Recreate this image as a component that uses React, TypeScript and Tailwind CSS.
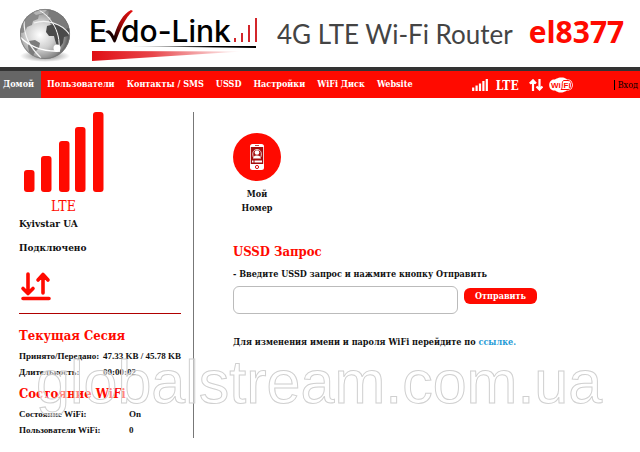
import type { ReactNode } from "react";

const NAV_ITEMS = ["Домой", "Пользователи", "Контакты / SMS", "USSD", "Настройки", "WiFi Диск", "Website"];

const BIG_BARS = [
  { x: 0, h: 22 },
  { x: 17, h: 36 },
  { x: 35, h: 51 },
  { x: 51, h: 65 },
  { x: 69, h: 80 }
];

function Globe() {
  return (
    <svg className="h-14 w-13 shrink-0" viewBox="0 0 52 56" aria-hidden="true">
      <defs>
        <radialGradient id="globe" cx="40%" cy="52%" r="62%">
          <stop offset="0" stopColor="#ffffff" />
          <stop offset="0.45" stopColor="#cfcfcf" />
          <stop offset="0.8" stopColor="#8a8a8a" />
          <stop offset="1" stopColor="#3c3c3c" />
        </radialGradient>
        <radialGradient id="globeShade">
          <stop offset="0" stopColor="#777" />
          <stop offset="1" stopColor="#777" stopOpacity="0" />
        </radialGradient>
        <clipPath id="globeClip">
          <circle cx="25" cy="28" r="25" />
        </clipPath>
      </defs>
      <ellipse cx="25" cy="50" rx="25" ry="6" fill="url(#globeShade)" />
      <circle cx="25" cy="28" r="25" fill="url(#globe)" />
      <g clipPath="url(#globeClip)">
        <path d="M1 22 4 12 12 6l8-3 6 1-2 4-5 1-1 4-5 2-1 4-5 2-2 5-3 1-3-1z" fill="#8a8a8a" />
        <path d="M11 5l8-3 9 1-4 4-8 2z" fill="#b5b5b5" />
        <path d="M29 5l8 1 7 6 5 9-3 2-4-3-4 1-3-3-4 1-2-4 2-3-3-2z" fill="#7a7a7a" />
        <path d="M27 20l7-2 6 2 5 3 4 1-1 6-4 1-1 6-3 4-3-1-2-6-1-4-5 0-3-4z" fill="#4a4a4a" />
        <path d="M9 35l6-1 5 3-1 5-4 4-2 4-4-4-1-6z" fill="#7c7c7c" />
        <path d="M0 31c8 8 20 15 40 14" fill="none" stroke="#fff" strokeWidth="1.6" />
        <path d="M17 3c12 6 24 20 22 42" fill="none" stroke="#fff" strokeWidth="1" />
        <path d="M14 17c12-4 28 0 36 12" fill="none" stroke="#f4f4f4" strokeWidth="1.2" />
        <path d="M4 15c0 16 6 26 17 37" fill="none" stroke="#f4f4f4" strokeWidth="1.2" />
        <circle cx="37" cy="42" r="3.5" fill="#fff" />
      </g>
      <circle cx="25" cy="28" r="24.6" fill="none" stroke="#777" strokeWidth="0.8" />
    </svg>
  );
}

function Logo() {
  return (
    <svg className="h-14 w-[170px] shrink-0" viewBox="0 0 170 56" role="img" aria-label="Evdo-Link">
      <defs>
        <linearGradient id="tick" x1="1" y1="0" x2="0" y2="1">
          <stop offset="0" stopColor="#e81010" />
          <stop offset="0.4" stopColor="#a80a0a" />
          <stop offset="0.75" stopColor="#1a0000" />
        </linearGradient>
        <linearGradient id="wedge">
          <stop offset="0" stopColor="#e00f14" />
          <stop offset="0.4" stopColor="#e8454a" />
          <stop offset="1" stopColor="#ffffff" />
        </linearGradient>
        <linearGradient id="rule">
          <stop offset="0.1" stopColor="#000" stopOpacity="0" />
          <stop offset="0.7" stopColor="#000" />
        </linearGradient>
      </defs>
      <text x="0" y="36" fontFamily="Inter, sans-serif" fontSize="30" fontWeight="500" fill="#000">
        E
      </text>
      <text x="32" y="36" fontFamily="Inter, sans-serif" fontSize="30" fontWeight="500" fill="#000">
        do-Link
      </text>
      <path d="M16 26c3-3 6-2 9 4C29 17 34 8 42 4l2 1C36 12 32 22 27 35c-1 2-2 2-3 0-2-5-4-8-8-9z" fill="url(#tick)" />
      <path d="M146 32v4M153 27v9M160 19v17M167 12v24" stroke="#d3262b" strokeWidth="2" />
      <path d="M23 40 167 40v2z" fill="url(#rule)" />
      <path d="M3 45 153 45.5 3 55z" fill="url(#wedge)" />
    </svg>
  );
}

function TransferArrows() {
  return (
    <svg className="h-[30px] w-8" viewBox="0 0 32 30" fill="none" stroke="#ff0a00" strokeLinecap="round" strokeLinejoin="round" strokeWidth="3.6" aria-hidden="true">
      <path d="M9 3v19M4 17.500l5 5 5-5M24 22V3.500M19 9l5-5.500 5 5.500M4 27.500h26" />
    </svg>
  );
}

function StatusIcons() {
  return (
    <div className="flex items-center text-white">
      <svg className="h-3 w-4" viewBox="0 0 16 12" stroke="currentColor" strokeWidth="2.2" aria-hidden="true">
        <path d="M1.200 8.500V12M4.600 6.500V12M8 4.500V12M11.400 2v10M14.800 0v12" />
      </svg>
      <span className="ml-2 pt-[3px] text-[12px] leading-4">LTE</span>
      <svg className="ml-[10px] h-3 w-[14px]" viewBox="0 0 14 12" fill="none" stroke="currentColor" strokeWidth="2.2" aria-hidden="true">
        <path d="M4 12V1.500M.8 4.600 4 1.400l3 3.200M10.500 0v10.500M7.500 7.500l3 3 3-3" />
      </svg>
      <svg className="ml-[6px] h-4 w-6" viewBox="0 0 24 16" aria-label="Wi-Fi">
        <path d="M5 2.500C7 2.500 8 .5 12.500.5S17 2.500 19 2.500c3 0 4.800 2.500 4.800 5.500s-2 5.500-5 5.500c-2 0-3 2-7 2s-4.500-2-6.500-2C2 13.500.2 11 .2 8S2 2.500 5 2.500z" fill="#fff" />
        <path d="M14.500 3.500H19c2.500 0 3.500 2 3.500 4.500s-1 4.500-3.500 4.500h-7c1-1 1.200-2 1.200-4.500s.3-3.500 1.300-4.500z" fill="none" stroke="#ff0a00" strokeWidth="1" />
        <text x="2" y="11" fontFamily="Liberation Sans, sans-serif" fontSize="8" fontWeight="700" fill="#ff0a00">
          Wi
        </text>
        <text x="14.500" y="11" fontFamily="Liberation Sans, sans-serif" fontSize="8" fontWeight="700" fill="#ff0a00">
          Fi
        </text>
      </svg>
    </div>
  );
}

function PhoneIcon() {
  return (
    <svg className="h-12 w-12" viewBox="0 0 48 48" aria-hidden="true">
      <circle cx="24" cy="24" r="24" fill="#ff0a00" />
      <rect x="17" y="11" width="14" height="26" rx="2.5" fill="#fff" />
      <path d="M22 12.500h4" stroke="#c44" strokeWidth="1" />
      <rect x="17.800" y="14" width="12.400" height="17" fill="#a30d0d" />
      <path d="M20.300 24c-3.500-10 11-10 7.500 0" fill="none" stroke="#fff" strokeWidth="0.8" />
      <circle cx="24" cy="19.500" r="2.3" fill="#fff" />
      <path d="M20 25.500c.5-2 1.500-3 4-3s3.500 1 4 3z" fill="#fff" />
      <path d="M19 28.500h1.500M21.500 28.500h7.500" stroke="#fff" strokeWidth="1.8" />
      <circle cx="24" cy="34" r="1.6" fill="#fff" stroke="#d11" strokeWidth="1" />
    </svg>
  );
}

function Title({ children }: { children: ReactNode }) {
  return <h2 className="text-[13px] leading-5 text-[#ff0a00]">{children}</h2>;
}

export default function App() {
  return (
    <div className="relative min-h-screen overflow-hidden bg-white font-['DejaVu_Serif_Condensed','DejaVu_Serif',serif] text-[9px] font-bold text-[#111]">
      <header className="flex h-[67px] items-center pl-5">
        <Globe />
        <div className="ml-[17px]">
          <Logo />
        </div>
        <p className="ml-[18px] whitespace-nowrap font-['Lato',sans-serif] text-[26px] leading-8 font-normal text-[#444]">4G LTE Wi-Fi Router</p>
        <p className="ml-4 pb-1 font-['Open_Sans',sans-serif] text-[30px] leading-8 text-[#ff0a00]">el8377</p>
      </header>

      <nav className="flex h-[31px] items-stretch border-t-4 border-[#333] bg-[#ff0a00]">
        {NAV_ITEMS.map((item, i) => (
          <a
            key={item}
            href="#"
            className={
              i === 0
                ? "flex items-center bg-[#666] pr-[7px] pl-[3px] whitespace-nowrap text-white"
                : "flex items-center px-[6px] whitespace-nowrap text-white"
            }
          >
            {item}
          </a>
        ))}
        <div className="mr-[41px] ml-auto flex items-center">
          <StatusIcons />
        </div>
        <a href="#" className="flex items-center pr-[2px] text-[9px] font-normal text-black">
          <span className="border-l border-black pl-[3px] leading-[10px]">Вход</span>
        </a>
      </nav>

      <div className="flex pt-[14px]">
        <aside className="w-[194px] shrink-0 border-r border-[#777] pl-[19px]">
          <svg className="ml-[5px] h-20 w-20" viewBox="0 0 80 80" fill="#ff0a00" aria-hidden="true">
            {BIG_BARS.map((bar) => (
              <rect key={bar.x} x={bar.x} y={80 - bar.h} width="10.5" height={bar.h} rx="3" />
            ))}
          </svg>
          <p className="ml-8 pt-1 text-[14px] leading-5 font-normal text-[#ff0a00]">LTE</p>
          <p className="text-[10px] leading-4">Kyivstar UA</p>
          <p className="mt-2 text-[10px] leading-4">Подключено</p>
          <div className="mt-[15px]">
            <TransferArrows />
          </div>
          <hr className="mt-3 mr-3 h-px border-0 bg-[#b00000]" />

          <div className="pt-3">
            <Title>Текущая Сесия</Title>
          </div>
          <table className="mt-[2px] font-['Liberation_Serif',serif] text-[9px] leading-4 whitespace-nowrap">
            <tbody>
              <tr>
                <th className="w-[84px] p-0 text-left">Принято/Передано:</th>
                <td className="p-0">47.33 KB / 45.78 KB</td>
              </tr>
              <tr>
                <th className="p-0 text-left">Длительность:</th>
                <td className="p-0">00:00:02</td>
              </tr>
            </tbody>
          </table>
          <div className="pt-1">
            <Title>Состояние WiFi</Title>
          </div>
          <table className="mt-[2px] font-['Liberation_Serif',serif] text-[9px] leading-4 whitespace-nowrap">
            <tbody>
              <tr>
                <th className="w-[110px] p-0 text-left">Состояние WiFi:</th>
                <td className="p-0">On</td>
              </tr>
              <tr>
                <th className="p-0 text-left">Пользователи WiFi:</th>
                <td className="p-0">0</td>
              </tr>
            </tbody>
          </table>
        </aside>

        <main className="min-w-0 flex-1 pt-[21px] pl-[39px]">
          <a href="#" className="flex w-12 flex-col items-center text-center">
            <PhoneIcon />
            <span className="mt-[6px] leading-[14px]">
              Мой
              <br />
              Номер
            </span>
          </a>

          <form className="mt-[27px]" onSubmit={(e) => e.preventDefault()}>
            <Title>USSD Запрос</Title>
            <label htmlFor="ussd" className="mt-1 block leading-4">
              - Введите USSD запрос и нажмите кнопку Отправить
            </label>
            <div className="mt-1 flex items-start">
              <input id="ussd" type="text" className="h-7 w-[225px] rounded-md border border-[#bbb] bg-white px-2 outline-none" />
              <button type="submit" className="mt-[2px] ml-[6px] h-4 w-[73px] rounded-md bg-[#ff0a00] leading-4 text-white">
                Отправить
              </button>
            </div>
          </form>

          <p className="mt-5 leading-4">
            Для изменения имени и пароля WiFi перейдите по{" "}
            <a href="#" className="text-[#1f9bd6]">
              ссылке.
            </a>
          </p>
        </main>
      </div>

      <div
        aria-hidden="true"
        className="pointer-events-none absolute top-[347px] left-9 font-['Liberation_Sans',sans-serif] text-[61px] leading-[70px] font-normal text-white/50 [-webkit-text-stroke:1px_#d0d0d0]"
      >
        globalstream.com.ua
      </div>
    </div>
  );
}
